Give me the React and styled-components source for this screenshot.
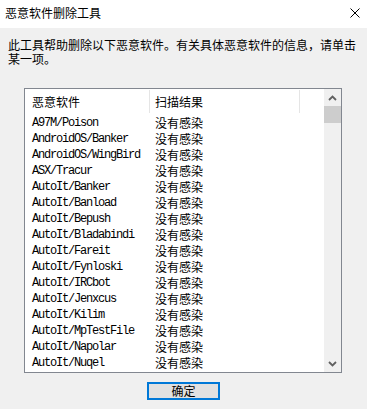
import styled, { createGlobalStyle } from 'styled-components';

const GlobalStyle = createGlobalStyle`
  html, body {
    margin: 0;
    padding: 0;
    background: #f0f0f0;
  }
  body {
    font-family: "Noto Sans CJK SC", "Noto Sans", sans-serif;
    font-size: 12px;
    color: #000;
  }
`;

const Window = styled.div`
  width: 367px;
  height: 409px;
  display: flex;
  flex-direction: column;
  background: #f0f0f0;
  overflow: hidden;
`;

const TitleBar = styled.div`
  height: 28px;
  flex-shrink: 0;
  background: #fff;
  display: flex;
  align-items: center;
  justify-content: space-between;
  padding: 0 7px 0 5px;
  box-sizing: border-box;
`;

const Title = styled.span`
  font-size: 12px;
  line-height: 14px;
  margin-top: -2px;
`;

const CloseIcon = styled.svg`
  width: 10px;
  height: 10px;
  margin-top: -3px;
`;

const Body = styled.div`
  flex: 1;
  display: flex;
  flex-direction: column;
  padding: 10px 0 0 8px;
`;

const Description = styled.p`
  margin: 0;
  width: 352px;
  font-size: 12px;
  line-height: 14px;
`;

const ListBox = styled.div`
  margin: 22px 0 0 16px;
  width: 318px;
  height: 285px;
  box-sizing: border-box;
  border: 1px solid #828790;
  background: #fff;
  display: flex;
  overflow: hidden;
`;

const ListArea = styled.div`
  flex: 1;
  display: flex;
  flex-direction: column;
`;

const Columns = styled.div`
  display: grid;
  grid-template-columns: 125px 150px 1fr;
  height: ${(p) => p.$height}px;
  align-items: center;
`;

const HeaderCell = styled.div`
  height: 23px;
  display: flex;
  align-items: center;
  padding-left: ${(p) => p.$pad}px;
  border-right: ${(p) => (p.$last ? 'none' : '1px solid #e5e5e5')};
  font-size: 12px;
  margin-top: -1px;
`;

const NameCell = styled.div`
  padding-left: 7px;
  font-family: "Liberation Mono", monospace;
  font-size: 12px;
  letter-spacing: -1.2px;
  white-space: nowrap;
`;

const ResultCell = styled.div`
  padding-left: 5px;
  font-size: 12px;
  white-space: nowrap;
`;

const ScrollBar = styled.div`
  width: 17px;
  background: #f0f0f0;
  display: flex;
  flex-direction: column;
  align-items: center;
`;

const ArrowButton = styled.div`
  height: 17px;
  width: 17px;
  display: flex;
  align-items: center;
  justify-content: center;
`;

const Thumb = styled.div`
  width: 17px;
  height: 17px;
  background: #cdcdcd;
`;

const Spacer = styled.div`
  flex: 1;
`;

const Footer = styled.div`
  display: flex;
  justify-content: center;
  padding-top: 9px;
  padding-right: 8px;
`;

const Button = styled.button`
  width: 73px;
  height: 18px;
  box-sizing: border-box;
  border: 2px solid #0078d7;
  background: #e1e1e1;
  font-family: "Noto Sans CJK SC", sans-serif;
  font-size: 12px;
  line-height: 12px;
  padding: 0;
  color: #000;
`;

const Chevron = ({ up }) => (
  <svg width="9" height="6" viewBox="0 0 9 6">
    <path
      d={up ? 'M1 5 L4.5 1.5 L8 5' : 'M1 1 L4.5 4.5 L8 1'}
      fill="none"
      stroke="#606060"
      strokeWidth="1.8"
    />
  </svg>
);

const rows = [
  'A97M/Poison',
  'AndroidOS/Banker',
  'AndroidOS/WingBird',
  'ASX/Tracur',
  'AutoIt/Banker',
  'AutoIt/Banload',
  'AutoIt/Bepush',
  'AutoIt/Bladabindi',
  'AutoIt/Fareit',
  'AutoIt/Fynloski',
  'AutoIt/IRCbot',
  'AutoIt/Jenxcus',
  'AutoIt/Kilim',
  'AutoIt/MpTestFile',
  'AutoIt/Napolar',
  'AutoIt/Nuqel',
];

export default function App() {
  return (
    <>
      <GlobalStyle />
      <Window>
        <TitleBar>
          <Title>恶意软件删除工具</Title>
          <CloseIcon viewBox="0 0 10 10">
            <path d="M0.5 0.5 L9.5 9.5 M9.5 0.5 L0.5 9.5" stroke="#000" strokeWidth="1" />
          </CloseIcon>
        </TitleBar>
        <Body>
          <Description>
            此工具帮助删除以下恶意软件。有关具体恶意软件的信息，请单击某一项。
          </Description>
          <ListBox>
            <ListArea>
              <Columns $height={25}>
                <HeaderCell $pad={7}>恶意软件</HeaderCell>
                <HeaderCell $pad={5}>扫描结果</HeaderCell>
                <HeaderCell $last />
              </Columns>
              {rows.map((name) => (
                <Columns key={name} $height={16}>
                  <NameCell>{name}</NameCell>
                  <ResultCell>没有感染</ResultCell>
                </Columns>
              ))}
            </ListArea>
            <ScrollBar>
              <ArrowButton>
                <Chevron up />
              </ArrowButton>
              <Thumb />
              <Spacer />
              <ArrowButton>
                <Chevron />
              </ArrowButton>
            </ScrollBar>
          </ListBox>
          <Footer>
            <Button>确定</Button>
          </Footer>
        </Body>
      </Window>
    </>
  );
}
